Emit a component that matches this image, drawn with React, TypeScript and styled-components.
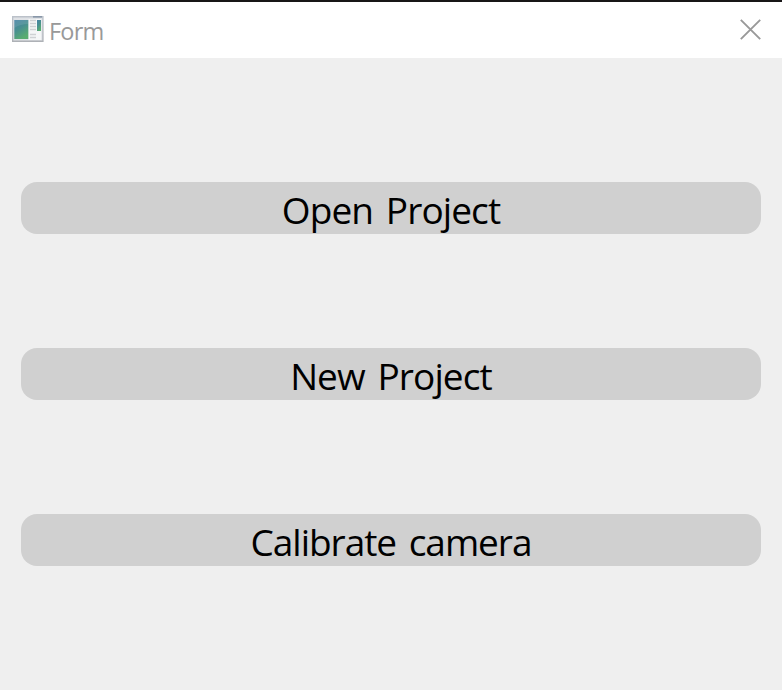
import React from "react";
import styled, { createGlobalStyle } from "styled-components";

const GlobalStyle = createGlobalStyle`
  * { box-sizing: border-box; }
  body { margin: 0; background: #efefef; }
`;

const Window = styled.div`
  display: flex;
  flex-direction: column;
  width: 782px;
  height: 690px;
  overflow: hidden;
  background: #efefef;
  border-top: 2px solid #181617;
  font-family: "Open Sans", "Noto Sans", sans-serif;
`;

const TitleBar = styled.header`
  display: flex;
  align-items: center;
  height: 56px;
  padding: 0 21.5px 2px 11px;
  background: #fff;
`;

const Title = styled.h1`
  flex: 1;
  margin: 3px 0 0 5px;
  font-size: 23.5px;
  font-weight: 370;
  line-height: 32px;
  letter-spacing: -0.8px;
  color: #999;
`;

const CloseButton = styled.button`
  display: flex;
  padding: 0;
  border: 0;
  background: none;
`;

const Actions = styled.main`
  display: flex;
  flex-direction: column;
  gap: 114px;
  padding: 124px 21px 0;
`;

const ActionButton = styled.button<{ $tracking: number }>`
  display: flex;
  align-items: center;
  justify-content: center;
  height: 52px;
  padding: 4px 0 0;
  border: 0;
  border-radius: 16px;
  background: #d0d0d0;
  color: #000;
  font: 370 37px/46px "Open Sans", "Noto Sans", sans-serif;
  letter-spacing: ${(p) => p.$tracking}px;
  word-spacing: 4px;
  white-space: nowrap;
`;

const FormIcon = () => (
  <svg width="33" height="28" viewBox="0 0 33 28">
    <defs>
      <linearGradient id="pane" x1="0" y1="0" x2="0.5" y2="1">
        <stop offset="0" stopColor="#4682a5" />
        <stop offset="0.5" stopColor="#488f91" />
        <stop offset="1" stopColor="#59ad70" />
      </linearGradient>
      <linearGradient id="frame" x1="0" y1="0" x2="0" y2="1">
        <stop offset="0" stopColor="#bcc2ca" />
        <stop offset="1" stopColor="#aeb1b6" />
      </linearGradient>
    </defs>
    <rect x="1" y="1" width="31.6" height="26" fill="url(#frame)" />
    <rect x="2.3" y="2.5" width="29" height="23" fill="#dfe2e6" />
    <rect x="22" y="1" width="9" height="1.6" fill="#8997a9" />
    <rect x="17.5" y="4" width="12.8" height="21" fill="#f5f6f7" />
    <rect x="3.3" y="5" width="14" height="19" fill="url(#pane)" />
    <path d="M3.3 13Q9 9 17.3 9V5H3.3Z" fill="#fff" opacity="0.1" />
    <path d="M19 5.5h6M19 8.5h6M19 11.5h6M19 14.5h6M19 19.5h6M19 22.5h6" stroke="#cfd1d4" strokeWidth="1.4" />
    <rect x="26" y="5" width="4" height="11" fill="url(#pane)" />
  </svg>
);

const CloseIcon = () => (
  <svg width="21" height="21" viewBox="0 0 21 21">
    <path d="M0.8 0.8L20.2 20.2M20.2 0.8L0.8 20.2" stroke="#999" strokeWidth="1.9" />
  </svg>
);

const actions = [
  { label: "Open Project", tracking: -0.9 },
  { label: "New Project", tracking: -0.9 },
  { label: "Calibrate camera", tracking: -1.03 },
];

export default function App() {
  return (
    <>
      <GlobalStyle />
      <Window>
        <TitleBar>
          <FormIcon />
          <Title>Form</Title>
          <CloseButton aria-label="Close">
            <CloseIcon />
          </CloseButton>
        </TitleBar>
        <Actions>
          {actions.map((a) => (
            <ActionButton key={a.label} $tracking={a.tracking}>
              {a.label}
            </ActionButton>
          ))}
        </Actions>
      </Window>
    </>
  );
}
